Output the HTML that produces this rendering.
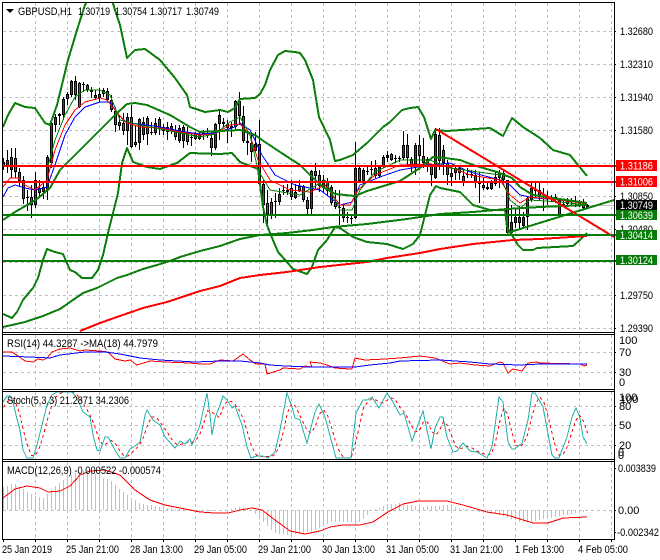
<!DOCTYPE html>
<html><head><meta charset="utf-8">
<style>
html,body{margin:0;padding:0;background:#fff;width:660px;height:560px;overflow:hidden}
svg{display:block}
text{font-family:"Liberation Sans",sans-serif;font-size:11px;fill:#000}
.w{fill:#fff}
polyline{shape-rendering:crispEdges}
</style></head>
<body>
<svg id="s" xmlns="http://www.w3.org/2000/svg" width="660" height="560" viewBox="0 0 660 560">
<rect width="660" height="560" fill="#fff"/>
<defs>
<clipPath id="cm"><rect x="3" y="3" width="611" height="329"/></clipPath>
<clipPath id="cr"><rect x="3" y="335" width="611" height="54"/></clipPath>
<clipPath id="cs"><rect x="3" y="392" width="611" height="67"/></clipPath>
<clipPath id="cd"><rect x="3" y="462" width="611" height="77"/></clipPath>
</defs>
<g id="grid" stroke="#c0c0c0" stroke-width="1" stroke-dasharray="3 3" shape-rendering="crispEdges" fill="none"></g>
<path d="M3 205.5H614" stroke="#c0c0c0" stroke-width="1" shape-rendering="crispEdges"/>
<g id="hist" stroke="#c0c0c0" stroke-width="1" shape-rendering="crispEdges" clip-path="url(#cd)"></g>
<g id="candles" clip-path="url(#cm)" shape-rendering="crispEdges"></g>
<g clip-path="url(#cm)" fill="none" stroke-linejoin="round">
<polyline stroke="#0000ff" stroke-width="1" points="3,197 8,188 15,185 25,188 35,190 47,187 55,165 65,135 75,117 85,107 100,102 110,102 117,113 127,123 140,124 160,127 180,131 200,134 215,133 235,127 240,123 250,130 262,155 275,175 295,185 320,190 340,205 352,202 360,185 380,177 400,170 430,165 450,163 470,172 500,180 510,185 520,195 535,198 560,200 587,204"/>
<polyline stroke="#ff0000" stroke-width="1" points="3,187 10,178 18,178 25,185 35,190 47,180 55,150 65,125 75,110 85,102 100,98 107,100 115,110 125,122 140,127 160,128 180,132 200,135 215,134 230,125 240,124 250,135 258,160 270,180 290,190 310,192 325,185 340,205 350,205 358,190 375,175 400,165 430,164 450,167 470,175 500,180 510,195 520,203 530,197 560,200 587,204"/>
<polyline stroke="#008000" stroke-width="1" points="47,170 55,140 65,115 75,97 85,90 100,90 110,95 120,120 140,125 180,133 200,137 215,134 230,122 240,117 250,135 258,170 270,190 300,195 325,180 340,210 352,210 360,190 375,172 400,160 430,160 450,168 500,175 510,200 520,208 530,200 560,202 587,205"/>
<g stroke="#0a7d0a" stroke-width="2">
<polyline points="3,127 8,115 15,103 25,107 35,108 45,123 50,125 57,105 68,60 77,30 85,5 88,0 112,0 115,10 120,25 127,58 135,50 145,49 160,60 175,78 187,95 190,107 205,112 220,110 228,112 235,108 240,99 255,98 260,94 265,85 270,70 278,55 285,51 295,52 300,53 305,60 313,80 319,117 330,140 335,161 340,160 353,155 367,143 383,127 390,122 402,110 410,108 418,107 424,117 431,139 435,130 447,131 490,128 503,136 512,118 523,127 540,138 553,150 570,155 578,165 587,176"/>
<polyline points="3,220 15,212 27,205 37,199 50,188 60,170 85,145 100,130 115,115 127,104 135,103 147,105 170,115 190,127 200,132 220,131 240,130 255,135 262,140 280,152 300,165 310,175 323,187 335,194 345,195 355,196 367,191 400,181 420,168 433,157 445,158 460,160 473,165 497,172 512,178 520,187 533,195 553,198 587,203"/>
<polyline points="3,314 12,318 17,312 23,300 27,295 33,288 38,278 43,260 47,249 55,252 63,254 70,270 75,272 82,278 92,278 98,270 103,255 108,233 113,213 118,193 122,163 127,148 133,162 147,167 160,169 177,163 190,153 220,154 232,153 240,162 258,169 263,207 267,225 270,233 278,252 287,262 293,269 307,274 312,267 318,250 327,240 335,227 340,228 353,237 367,242 387,244 403,249 413,244 420,235 425,215 430,195 436,186 440,188 460,192 473,205 483,208 490,210 505,210 507,227 518,245 523,250 533,250 537,248 573,246 580,240 587,233"/>
<polyline points="3,327 12,325 25,322 43,316 60,309 83,293 97,288 117,278 127,275 143,269 157,265 170,261 180,257 200,251 220,246 240,239 260,235 287,233 313,230 333,227 367,224 407,219 440,214 473,212 507,209 540,207 587,205"/>
<polyline points="507,233 614,200"/>
</g>
<polyline stroke="#ff0000" stroke-width="2" points="80,331 100,323 117,317 143,308 167,302 200,291 220,286 240,278 260,275 287,272 320,267 367,262 387,258 420,253 440,249 473,244 513,240 540,239 587,236"/>
<polyline stroke="#ff0000" stroke-width="2" points="436,129 614,237"/>
</g>
<g shape-rendering="crispEdges" stroke-width="2">
<path d="M3 166H616M3 182H616" stroke="#ff0000"/>
<path d="M3 215H616M3 235H616M3 261H616" stroke="#067d06"/>
</g>
<polyline clip-path="url(#cr)" fill="none" stroke="#ff0000" points="3,352 12,352 18,356 25,361 33,362 38,359 43,360 47,358 52,352 60,349 70,348 80,351 85,350 100,351 108,352 115,359 125,361 130,360 137,365 150,361 165,362 190,363 200,364 210,364 220,360 233,361 243,354 250,360 256,364 265,364 267,374 280,370 283,368 300,369 305,366 312,367 310,362 320,363 327,365 335,368 350,369 352,369 355,358 365,360 385,359 400,358 420,356 435,358 440,360 450,364 460,363 475,365 490,366 500,362 503,363 508,373 513,369 522,371 528,363 537,362 540,363 580,364 584,366 587,365"/>
<polyline clip-path="url(#cr)" fill="none" stroke="#0000ff" points="3,356 30,357 50,358 60,355 85,352 105,352 120,354 140,358 160,360 195,362 220,361 240,361 260,363 270,365 285,366 310,367 355,367 370,365 390,363 400,361 440,360 470,362 490,364 520,365 540,364 587,364"/>
<g id="stoch" clip-path="url(#cs)" fill="none"></g>
<polyline clip-path="url(#cd)" fill="none" stroke="#ff0000" points="3,498 15,489 27,486 40,488 48,492 60,491 70,486 80,475 90,471 105,470 120,475 135,490 150,500 165,505 185,509 200,512 215,513 228,513 240,510 252,508 262,510 275,520 290,531 305,534 320,531 330,527 343,525 360,525 373,522 388,512 403,504 418,501 447,501 463,505 487,512 507,515 520,519 533,523 548,523 563,518 587,517"/>
<g stroke="#000" stroke-width="1" shape-rendering="crispEdges" fill="none">
<path d="M2.5 2.5H614.5M2.5 332.5H614.5M2.5 334.5H614.5M2.5 389.5H614.5M2.5 391.5H614.5M2.5 459.5H614.5M2.5 461.5H614.5M2.5 539.5H614.5"/>
<path d="M2.5 2V540M614.5 2V540"/>
<path id="ticks" d=""/>
</g>
<path d="M6 9h8l-4 4z" fill="#000"/>
<g>
<text x="18" y="15" textLength="54" lengthAdjust="spacingAndGlyphs">GBPUSD,H1</text>
<text x="78" y="15" textLength="32" lengthAdjust="spacingAndGlyphs">1.30719</text>
<text x="115" y="15" textLength="32" lengthAdjust="spacingAndGlyphs">1.30754</text>
<text x="150" y="15" textLength="32" lengthAdjust="spacingAndGlyphs">1.30717</text>
<text x="186" y="15" textLength="33" lengthAdjust="spacingAndGlyphs">1.30749</text>
<text x="7" y="347" textLength="151" lengthAdjust="spacingAndGlyphs">RSI(14) 44.3287  -&gt;MA(18) 44.7979</text>
<text x="7" y="404" textLength="122" lengthAdjust="spacingAndGlyphs">Stoch(5,3,3) 21.2871 34.2306</text>
<text x="7" y="474" textLength="154" lengthAdjust="spacingAndGlyphs">MACD(12,26,9) -0.000522 -0.000574</text>
</g>
<g id="ax">
<text x="620" y="35" textLength="33" lengthAdjust="spacingAndGlyphs">1.32680</text>
<text x="620" y="68" textLength="33" lengthAdjust="spacingAndGlyphs">1.32310</text>
<text x="620" y="101" textLength="33" lengthAdjust="spacingAndGlyphs">1.31940</text>
<text x="620" y="134" textLength="33" lengthAdjust="spacingAndGlyphs">1.31580</text>
<text x="620" y="200" textLength="33" lengthAdjust="spacingAndGlyphs">1.30850</text>
<text x="620" y="233" textLength="33" lengthAdjust="spacingAndGlyphs">1.30480</text>
<text x="620" y="299" textLength="33" lengthAdjust="spacingAndGlyphs">1.29750</text>
<text x="620" y="332" textLength="33" lengthAdjust="spacingAndGlyphs">1.29390</text>
</g>
<g shape-rendering="crispEdges">
<rect x="616" y="160" width="41" height="11" fill="#ff0000"/>
<rect x="616" y="176" width="41" height="11" fill="#ff0000"/>
<rect x="616" y="200" width="41" height="10" fill="#000"/>
<rect x="616" y="210" width="41" height="10" fill="#067d06"/>
<rect x="616" y="230" width="41" height="10" fill="#067d06"/>
<rect x="616" y="255" width="41" height="10" fill="#067d06"/>
</g>
<text class="w" x="620" y="169.5" textLength="33" lengthAdjust="spacingAndGlyphs">1.31186</text>
<text class="w" x="620" y="185.5" textLength="33" lengthAdjust="spacingAndGlyphs">1.31006</text>
<text class="w" x="620" y="209" textLength="33" lengthAdjust="spacingAndGlyphs">1.30749</text>
<text class="w" x="620" y="219" textLength="33" lengthAdjust="spacingAndGlyphs">1.30639</text>
<text class="w" x="620" y="239" textLength="33" lengthAdjust="spacingAndGlyphs">1.30414</text>
<text class="w" x="620" y="264" textLength="33" lengthAdjust="spacingAndGlyphs">1.30124</text>
<text x="619" y="344">100</text>
<text x="619" y="356">70</text>
<text x="619" y="376">30</text>
<text x="619" y="386">0</text>
<text x="619" y="401">100</text>
<text x="620" y="403">100</text>
<text x="619" y="410">80</text>
<text x="619" y="429">50</text>
<text x="619" y="449">20</text>
<text x="618" y="456">0</text>
<text x="618" y="459">0</text>
<text x="618" y="472" textLength="38" lengthAdjust="spacingAndGlyphs">0.003839</text>
<text x="618" y="514">0.00</text>
<text x="617" y="536" textLength="42" lengthAdjust="spacingAndGlyphs">-0.002342</text>
<g>
<text x="2" y="553" textLength="50" lengthAdjust="spacingAndGlyphs">25 Jan 2019</text>
<text x="66" y="553" textLength="53" lengthAdjust="spacingAndGlyphs">25 Jan 21:00</text>
<text x="130" y="553" textLength="53" lengthAdjust="spacingAndGlyphs">28 Jan 13:00</text>
<text x="194" y="553" textLength="53" lengthAdjust="spacingAndGlyphs">29 Jan 05:00</text>
<text x="258" y="553" textLength="53" lengthAdjust="spacingAndGlyphs">29 Jan 21:00</text>
<text x="322" y="553" textLength="53" lengthAdjust="spacingAndGlyphs">30 Jan 13:00</text>
<text x="386" y="553" textLength="53" lengthAdjust="spacingAndGlyphs">31 Jan 05:00</text>
<text x="450" y="553" textLength="53" lengthAdjust="spacingAndGlyphs">31 Jan 21:00</text>
<text x="515" y="553" textLength="49" lengthAdjust="spacingAndGlyphs">1 Feb 13:00</text>
<text x="578" y="553" textLength="50" lengthAdjust="spacingAndGlyphs">4 Feb 05:00</text>
</g>
</svg>
<script>
(function(){
var NS="http://www.w3.org/2000/svg";
function el(n,a,p){var e=document.createElementNS(NS,n);for(var k in a)e.setAttribute(k,a[k]);p.appendChild(e);return e}
var G=document.getElementById("grid"),d="",x,y;
for(x=35.5;x<614;x+=32){d+="M"+x+" 3V332M"+x+" 335V389M"+x+" 392V459M"+x+" 462V539"}
[31,64,97,130,163,196,229,262,295,328,352,372,406,425,445,510].forEach(function(v){d+="M3 "+(v+.5)+"H614"});
el("path",{d:d},G);
var t="";
for(x=3.5;x<614;x+=32)t+="M"+x+" 540v2";
[31,64,97,130,196,229,295,328,352,372,406,425,445,468,510,532].forEach(function(v){t+="M614 "+(v+.5)+"h2"});
document.getElementById("ticks").setAttribute("d",t);
var c=[[162,166,158,170,1],[160,166,150,173,1],[157,170,148,178,1],[158,172,148,178,0],[172,181,168,187,0],[180,199,176,204,0],[197,198,190,211,0],[197,205,185,218,0],[180,205,172,208,1],[188,193,180,198,0],[187,192,183,199,1],[157,190,155,200,1],[123,163,123,168,1],[117,125,114,132,1],[114,116,113,125,0],[99,115,97,120,1],[94,99,92,105,1],[81,95,80,97,1],[81,95,76,100,0],[83,107,82,108,0],[84,85,82,92,0],[85,90,84,92,0],[90,92,87,98,0],[95,98,90,100,0],[94,98,88,102,1],[90,94,88,97,1],[91,100,88,102,0],[100,110,95,112,0],[111,125,107,132,0],[122,126,115,130,0],[123,131,113,135,0],[117,131,113,145,1],[117,147,105,148,0],[142,145,125,147,1],[119,143,118,150,1],[122,135,117,140,1],[118,134,116,145,0],[132,133,122,135,0],[123,133,118,135,1],[119,128,117,135,0],[127,131,124,135,0],[127,132,122,140,1],[126,131,123,134,0],[130,137,125,140,0],[128,141,125,143,1],[127,141,125,148,1],[132,142,127,145,0],[137,138,134,146,0],[134,139,132,140,1],[134,139,131,140,1],[133,135,130,140,1],[134,136,128,138,1],[138,148,135,156,0],[124,148,123,150,1],[115,124,110,140,1],[122,124,118,127,0],[124,128,120,143,0],[126,128,122,137,1],[101,127,100,130,1],[101,116,92,125,0],[116,141,106,143,0],[141,143,130,155,0],[143,152,132,162,0],[144,151,132,152,1],[144,184,120,186,0],[184,205,180,223,0],[203,214,190,224,0],[202,215,198,219,0],[201,202,193,218,0],[194,202,188,205,1],[190,191,185,195,0],[190,192,184,195,0],[188,197,180,200,0],[192,198,184,199,1],[186,191,180,192,0],[186,200,185,202,0],[200,209,197,215,0],[171,209,170,215,1],[171,176,163,190,0],[175,186,170,192,0],[180,188,175,193,1],[181,191,178,195,0],[187,203,185,205,0],[202,207,190,209,0],[207,208,190,225,0],[208,218,205,222,0],[217,218,212,223,0],[218,219,214,224,0],[168,218,142,219,1],[168,181,165,182,0],[170,181,168,182,1],[171,172,167,175,0],[169,170,161,175,0],[168,176,160,178,0],[167,176,165,178,1],[157,167,155,168,1],[155,158,151,162,1],[154,160,153,161,0],[158,159,155,163,0],[158,159,156,162,0],[145,158,131,160,1],[145,158,134,165,0],[159,167,157,172,0],[145,167,143,175,1],[145,156,135,170,0],[156,163,138,168,0],[159,166,157,172,0],[166,175,164,186,0],[134,178,128,179,1],[135,161,128,170,0],[150,163,145,175,0],[163,175,160,185,0],[173,177,168,186,1],[168,173,165,180,1],[168,173,165,180,0],[176,182,170,186,0],[174,175,168,178,1],[174,175,170,178,0],[175,183,170,188,0],[181,184,172,203,0],[185,188,178,190,0],[187,189,183,190,0],[183,189,180,190,1],[177,184,172,186,1],[173,178,170,188,1],[173,180,170,186,0],[180,233,180,235,0],[222,233,205,234,1],[217,223,208,228,1],[217,223,206,229,0],[217,226,212,228,1],[198,217,196,230,1],[188,200,183,202,1],[190,191,181,198,0],[190,197,181,200,0],[194,195,188,211,0],[196,197,191,205,0],[197,198,195,202,0],[197,199,194,203,0],[200,215,198,217,0],[204,206,200,207,1],[201,204,198,206,1],[200,201,198,205,1],[201,202,196,207,1],[203,204,200,207,1],[203,208,199,209,0],[205,208,204,209,1]];
var W="",B="",R="",U="";
c.forEach(function(b,i){var px=3+4*i;
W+="M"+(px+.5)+" "+b[2]+"V"+b[3];
B+="M"+(px-1)+" "+b[0]+"h3V"+b[1]+"h-3z";
if(b[1]-b[0]>2){var s="M"+px+" "+(b[0]+1)+"h1V"+(b[1]-1)+"h-1z";if(b[4])U+=s;else R+=s}});
var C=document.getElementById("candles");
el("path",{d:W,stroke:"#000",fill:"none"},C);
el("path",{d:B,fill:"#000"},C);
el("path",{d:R,fill:"#e02020"},C);
el("path",{d:U,fill:"#0c6b0c"},C);
function interp(a,x){for(var i=1;i<a.length;i++){if(x<=a[i][0]){var p=a[i-1],q=a[i];return p[1]+(q[1]-p[1])*(x-p[0])/(q[0]-p[0]||1)}}return a[a.length-1][1]}
var st=[[3,402],[7,396],[10,396],[13,402],[16,415],[20,430],[23,450],[27,458],[33,458],[37,445],[42,425],[47,405],[52,395],[57,392],[72,392],[77,398],[83,412],[90,417],[93,435],[97,450],[100,451],[105,437],[108,437],[115,450],[120,458],[125,458],[130,449],[135,446],[140,442],[145,415],[147,410],[153,420],[160,425],[165,437],[175,448],[180,441],[185,444],[190,439],[192,445],[200,425],[207,393],[210,415],[212,435],[215,418],[220,405],[223,396],[227,400],[232,408],[235,406],[242,425],[247,447],[251,458],[257,456],[263,456],[268,458],[275,452],[280,430],[287,393],[292,407],[295,418],[300,420],[307,443],[315,412],[319,404],[325,417],[336,458],[351,458],[356,413],[363,400],[367,400],[372,397],[379,408],[387,393],[393,402],[400,415],[404,413],[412,441],[423,411],[431,449],[435,428],[440,417],[443,417],[447,437],[453,452],[457,451],[463,443],[470,451],[477,452],[487,458],[492,447],[499,397],[503,402],[508,442],[512,449],[515,449],[522,443],[528,420],[532,393],[535,393],[543,407],[552,455],[555,458],[559,458],[567,437],[572,417],[576,408],[580,418],[583,437],[587,444]];
var sig="",S=document.getElementById("stoch");
for(x=3.5;x<=587.5;x+=4){var v=(interp(st,x)+interp(st,x-4)+interp(st,x-8))/3;sig+=x+","+v.toFixed(1)+" "}
el("polyline",{points:sig,stroke:"#ff0000","stroke-dasharray":"3 3"},S);
el("polyline",{points:st.map(function(p){return p.join(",")}).join(" "),stroke:"#20b2aa"},S);
var h=[[3,487],[12,484],[17,484],[27,492],[33,495],[43,498],[55,486],[63,480],[77,472],[87,470],[113,482],[123,492],[130,497],[140,503],[160,507],[180,509],[200,511],[228,510],[240,507],[250,508],[262,520],[275,533],[290,535],[305,533],[320,528],[330,522],[360,522],[370,512],[385,505],[400,503],[420,507],[447,505],[470,510],[500,515],[520,522],[530,522],[550,518],[587,511]];
var H="",HG=document.getElementById("hist");
for(x=3.5;x<=587.5;x+=4){H+="M"+x+" 510V"+interp(h,x).toFixed(0)}
el("path",{d:H},HG);
})();
</script>
</body></html>
